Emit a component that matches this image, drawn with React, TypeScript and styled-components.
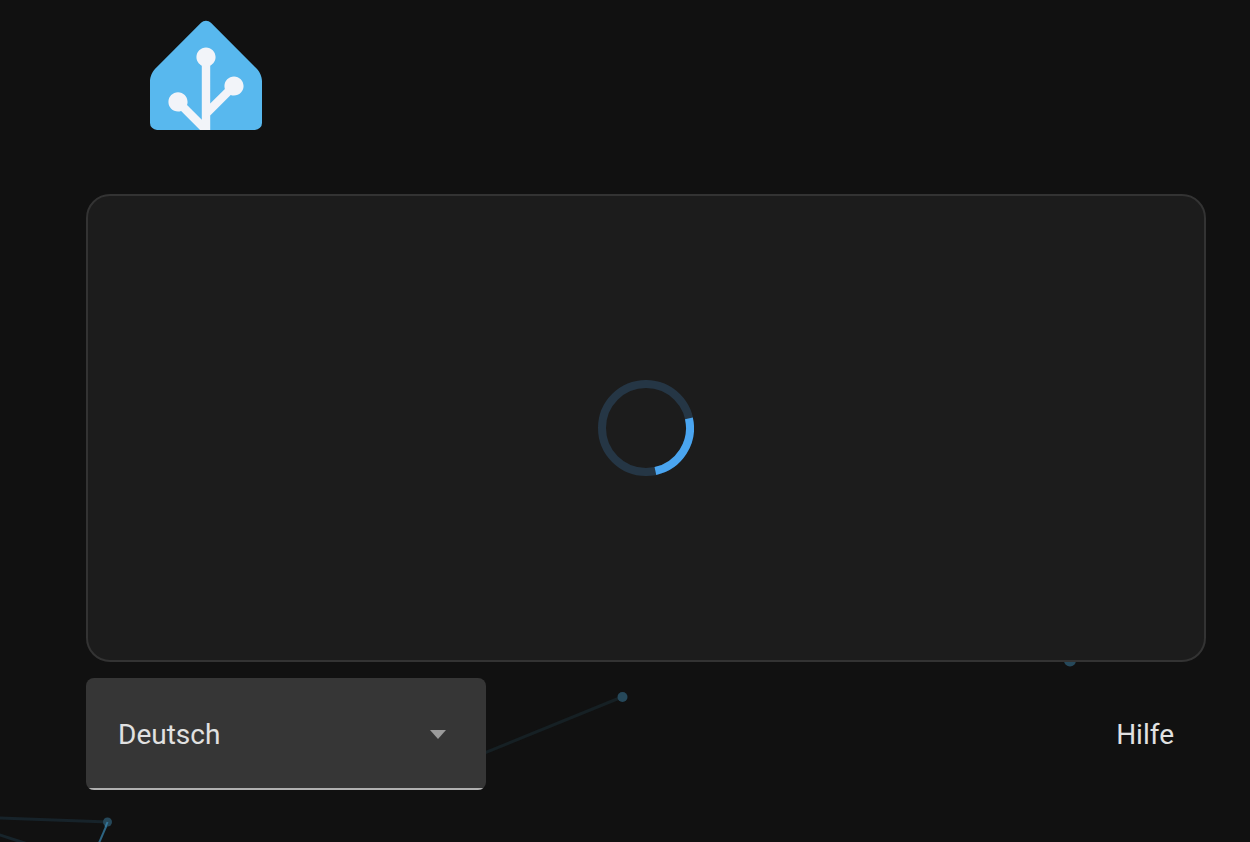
import React from "react";
import styled, { createGlobalStyle } from "styled-components";

const GlobalStyle = createGlobalStyle`
  * { box-sizing: border-box; }
  body {
    margin: 0;
    background: #111111;
    color: #e1e1e1;
    font-family: Roboto, "Liberation Sans", sans-serif;
    font-size: 28px;
    line-height: 32px;
  }
`;

const Page = styled.div`
  position: relative;
  min-height: 100vh;
  overflow: hidden;
`;

const Particles = styled.svg`
  position: absolute;
  inset: 0;
  width: 100%;
  height: 100%;
  pointer-events: none;
`;

const Content = styled.div`
  position: relative;
  display: flex;
  flex-direction: column;
  padding: 18px 44px 52px 86px;
`;

const Header = styled.header`
  display: flex;
  padding: 0 64px;
  margin-bottom: 64px;
`;

const Logo = styled.svg`
  display: block;
  width: 112px;
  height: 112px;
`;

const Card = styled.main`
  display: flex;
  align-items: center;
  justify-content: center;
  min-height: 468px;
  background: #1c1c1c;
  border: 2px solid #333333;
  border-radius: 24px;
`;

const Spinner = styled.svg`
  display: block;
  width: 96px;
  height: 96px;
`;

const Footer = styled.footer`
  display: flex;
  align-items: center;
  justify-content: space-between;
  margin-top: 16px;
`;

const SelectField = styled.div`
  display: grid;
  align-items: center;
  width: 400px;
  overflow: hidden;
  background: #363636;
  border-radius: 8px;

  > * { grid-area: 1 / 1; }
`;

const LanguageSelect = styled.select`
  appearance: none;
  width: 100%;
  height: 112px;
  padding: 4px 96px 0 32px;
  border: 0;
  border-bottom: 2px solid #b0b0b0;
  outline: none;
  background: transparent;
  color: inherit;
  font: inherit;
`;

const Arrow = styled.svg`
  justify-self: end;
  width: 16px;
  height: 10px;
  margin-right: 40px;
  pointer-events: none;
`;

const HelpLink = styled.a`
  padding: 18px 32px 16px;
  color: inherit;
  text-decoration: none;
`;

export default function App() {
  return (
    <>
      <GlobalStyle />
      <Page>
        <Particles aria-hidden="true">
          <g strokeWidth="2" fill="none">
            <path d="M622 697L440 771" stroke="#162024" strokeWidth="3" />
            <path d="M-10 817.500L108 822" stroke="#17232a" strokeWidth="3" />
            <path d="M-6 833L40 848" stroke="#17242b" strokeWidth="3" />
            <path d="M108 822L96 850" stroke="#2d6482" />
          </g>
          <g fill="#26485a">
            <circle cx="622.500" cy="697" r="5" />
            <circle cx="1070" cy="660.500" r="6" />
            <circle cx="107.500" cy="822" r="4.500" />
          </g>
          <path d="M107.500 822L105.500 827" stroke="#347699" strokeWidth="2" />
        </Particles>
        <Content>
          <Header>
            <Logo viewBox="0 0 240 240" role="img" aria-label="Home Assistant">
              <path
                fill="#58b8ee"
                d="M240 224.762a15 15 0 0 1-15 15H15a15 15 0 0 1-15-15v-90c0-8.250 4.770-19.769 10.610-25.609l98.780-98.781c5.830-5.830 15.380-5.830 21.210 0l98.790 98.790c5.830 5.830 10.610 17.360 10.610 25.610z"
              />
              <path
                fill="#f2f4f9"
                d="m107.270 239.762-40.630-40.630c-2.090.720-4.320 1.130-6.640 1.130-11.300 0-20.500-9.200-20.500-20.500s9.200-20.500 20.500-20.500 20.500 9.200 20.500 20.500c0 2.330-.410 4.560-1.130 6.650l31.630 31.630v-115.880c-6.800-3.340-11.500-10.320-11.500-18.390 0-11.300 9.200-20.500 20.500-20.500s20.500 9.200 20.500 20.500c0 8.070-4.700 15.050-11.500 18.390v81.270l31.460-31.460c-.620-1.960-.960-4.040-.960-6.200 0-11.300 9.200-20.500 20.500-20.500s20.500 9.200 20.500 20.500-9.200 20.500-20.500 20.500c-2.500 0-4.880-.470-7.090-1.290L129 208.892v30.870z"
              />
            </Logo>
          </Header>
          <Card>
            <Spinner viewBox="0 0 96 96" role="progressbar" aria-label="Laden">
              <circle cx="48" cy="48" r="44" fill="none" stroke="#253645" strokeWidth="8" />
              <path
                d="M90.900 38.300A44 44 0 0 1 57.400 91"
                fill="none"
                stroke="#4aa5f0"
                strokeWidth="8"
              />
            </Spinner>
          </Card>
          <Footer>
            <SelectField>
              <LanguageSelect aria-label="Sprache" defaultValue="de">
                <option value="de">Deutsch</option>
              </LanguageSelect>
              <Arrow viewBox="0 0 16 10" aria-hidden="true">
                <path d="M0 1h16L8 10z" fill="#9b9b9b" />
              </Arrow>
            </SelectField>
            <HelpLink href="#hilfe">Hilfe</HelpLink>
          </Footer>
        </Content>
      </Page>
    </>
  );
}
